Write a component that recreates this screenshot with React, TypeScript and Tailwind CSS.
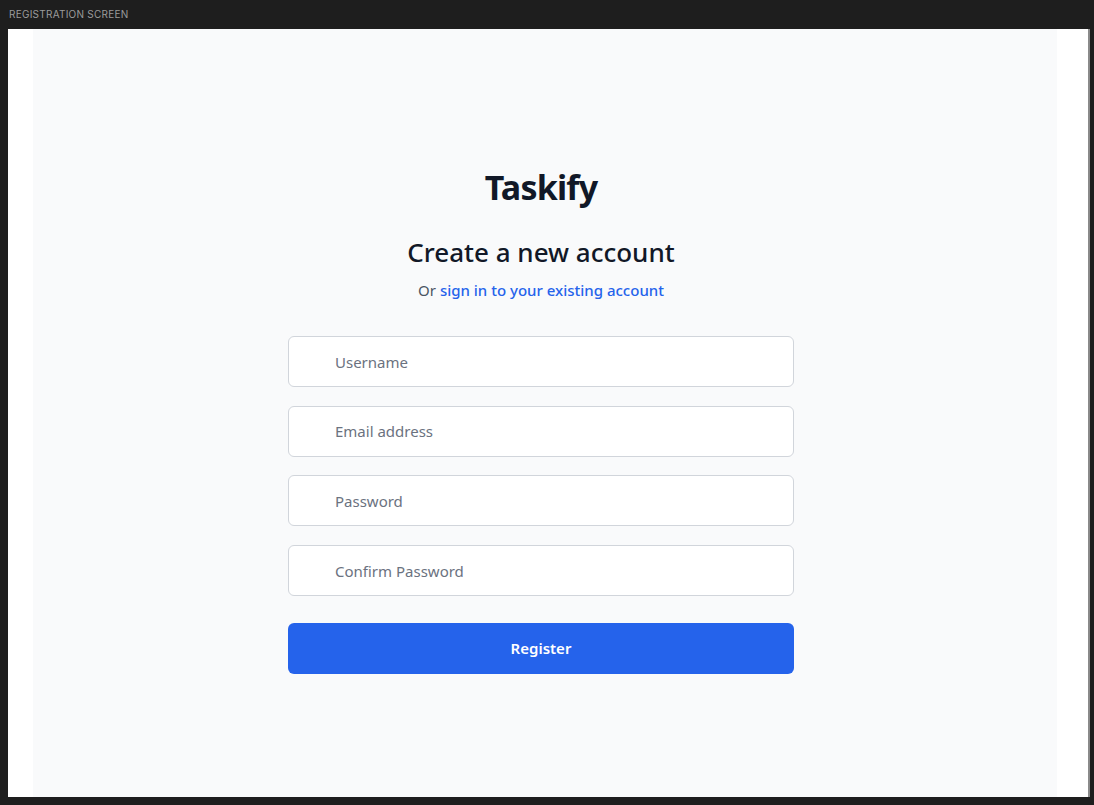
const fields = [
  { name: "username", type: "text", placeholder: "Username" },
  { name: "email", type: "email", placeholder: "Email address" },
  { name: "password", type: "password", placeholder: "Password" },
  { name: "confirm", type: "password", placeholder: "Confirm Password" },
];

export default function App() {
  return (
    <div
      className="flex h-[805px] w-[1094px] flex-col bg-[#1e1e1e]"
      style={{ fontFamily: '"Noto Sans", "Open Sans", sans-serif' }}
    >
      <div className="flex h-[29px] items-center pl-[9px] text-[10px] tracking-wide text-[#9b9b9b]" style={{ fontFamily: "Inter, sans-serif" }}>
        REGISTRATION SCREEN
      </div>
      <div className="ml-[8px] flex h-[768px] w-[1082px] border-r-2 border-[#8a8a8a] bg-white pl-[25px]">
        <div className="flex w-[1024px] flex-col items-center bg-[#f9fafb] pt-[138px] pr-[8px]">
          <h1 className="text-[34px] leading-[40px] font-bold tracking-[-0.8px] text-[#111827]">Taskify</h1>
          <h2 className="mt-[29px] text-[26px] leading-[32px] font-medium text-[#111827]">
            Create a new account
          </h2>
          <p className="mt-[12px] text-[15px] leading-[20px] text-[#4b5563]">
            Or{" "}
            <a href="#" className="font-medium text-[#2563eb]">
              sign in to your existing account
            </a>
          </p>
          <form className="mt-[36px] flex w-[506px] flex-col">
            <div className="flex flex-col gap-[18.7px]">
              {fields.map((f) => (
                <input
                  key={f.name}
                  name={f.name}
                  type={f.type}
                  placeholder={f.placeholder}
                  className="h-[51px] w-full rounded-md border border-[#d1d5db] bg-white pl-[46px] pr-3 text-[15px] text-[#111827] placeholder:text-[#6b7280] outline-none"
                />
              ))}
            </div>
            <button
              type="button"
              className="mt-[27px] h-[51px] w-full rounded-md bg-[#2563eb] text-[15px] font-semibold text-white"
            >
              Register
            </button>
          </form>
        </div>
      </div>
    </div>
  );
}
